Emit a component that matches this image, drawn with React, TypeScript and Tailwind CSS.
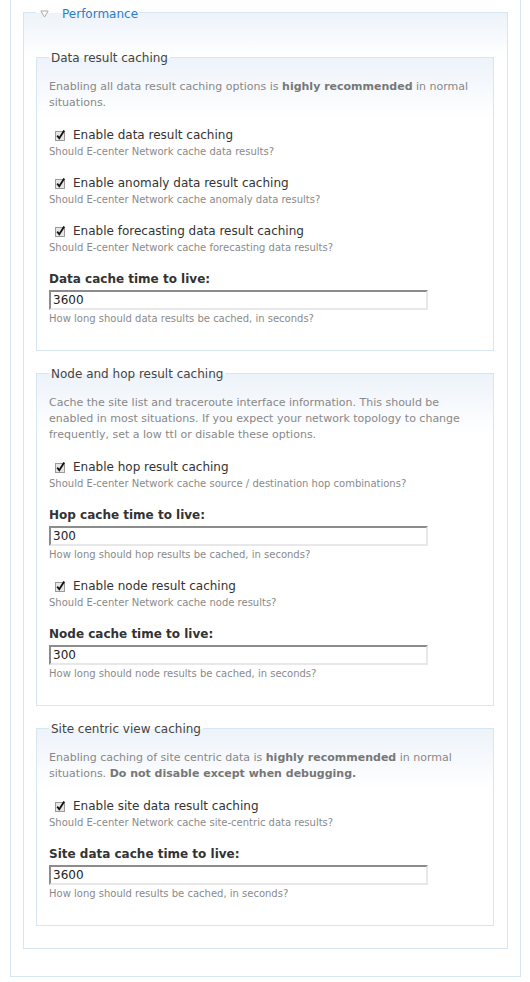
import React from "react";

const font = "font-['DejaVu_Sans',Verdana,sans-serif]";

function Check() {
  return (
    <svg width="13" height="13" viewBox="0 0 13 13" className="shrink-0">
      <rect x="1.5" y="2.5" width="9" height="9" fill="#e6e6e6" stroke="#9a9a9a" />
      <path d="M3.2 6.6 L5.3 9.2 L10.2 1.6" fill="none" stroke="#111" strokeWidth="1.8" />
    </svg>
  );
}

function CheckItem({ label, help }: { label: string; help: string }) {
  return (
    <div className="mt-4">
      <div className="flex items-center gap-[6px] pl-[5px] h-4 text-[12px] leading-4 text-[#333]">
        <Check />
        <span>{label}</span>
      </div>
      <p className="mt-[2px] text-[10px] leading-[14px] text-[#8a8a8a]">{help}</p>
    </div>
  );
}

function TextItem({ label, value, help }: { label: string; value: string; help: string }) {
  return (
    <div className="mt-4">
      <div className="text-[12px] leading-4 font-bold text-[#333]">{label}</div>
      <input
        readOnly
        value={value}
        className="mt-[3px] block w-[379px] h-5 px-[2px] border-2 border-t-[#8c8c8c] border-l-[#8c8c8c] border-r-[#e8e8e8] border-b-[#e8e8e8] bg-white text-[12px] text-[#222] outline-none"
      />
      <p className="mt-[2px] text-[10px] leading-[14px] text-[#8a8a8a]">{help}</p>
    </div>
  );
}

function Section({ title, children, className = "" }: { title: string; children: React.ReactNode; className?: string }) {
  return (
    <fieldset
      className={`w-[458px] border border-[#d8e6f2] bg-[linear-gradient(to_bottom,#edf3fa,#ffffff_60px)] pl-3 pr-3 pb-6 ${className}`}
    >
      <legend className="px-[2px] pt-[2px] text-[12px] leading-4 text-[#444]">{title}</legend>
      {children}
    </fieldset>
  );
}

export default function App() {
  return (
    <div className={`h-[982px] overflow-hidden bg-white ${font}`}>
      <div className="ml-[10px] w-[511px] border border-t-0 border-[#d8e6f2] pt-[2px] pb-[27px] px-3">
        {/* Performance */}
        <fieldset className="w-[485px] border border-[#d8e6f2] bg-[linear-gradient(to_bottom,#edf3fa,#ffffff_45px)] pl-3 pt-[26px] pb-[22px]">
          <legend className="pl-[4px] pr-[1px] pt-[4px] flex items-center text-[12px] leading-4 text-[#2a7dc9]">
            <svg width="9" height="8" viewBox="0 0 9 8" className="mr-[13px]">
              <path d="M0.8 1 H8.2 L4.5 7 Z" fill="#fff" stroke="#aaa" />
            </svg>
            Performance
          </legend>

          <Section title="Data result caching">
            <p className="mt-[13px] text-[11px] leading-4 text-[#888]">
              Enabling all data result caching options is <b className="text-[#777]">highly recommended</b> in normal situations.
            </p>
            <CheckItem label="Enable data result caching" help="Should E-center Network cache data results?" />
            <CheckItem label="Enable anomaly data result caching" help="Should E-center Network cache anomaly data results?" />
            <CheckItem label="Enable forecasting data result caching" help="Should E-center Network cache forecasting data results?" />
            <TextItem label="Data cache time to live:" value="3600" help="How long should data results be cached, in seconds?" />
          </Section>

          <Section title="Node and hop result caching" className="mt-[13px]">
            <p className="mt-[13px] text-[11px] leading-4 text-[#888]">
              Cache the site list and traceroute interface information. This should be enabled in most situations. If you expect your network topology to change frequently, set a low ttl or disable these options.
            </p>
            <CheckItem label="Enable hop result caching" help="Should E-center Network cache source / destination hop combinations?" />
            <TextItem label="Hop cache time to live:" value="300" help="How long should hop results be cached, in seconds?" />
            <CheckItem label="Enable node result caching" help="Should E-center Network cache node results?" />
            <TextItem label="Node cache time to live:" value="300" help="How long should node results be cached, in seconds?" />
          </Section>

          <Section title="Site centric view caching" className="mt-[13px]">
            <p className="mt-[13px] text-[11px] leading-4 text-[#888]">
              Enabling caching of site centric data is <b className="text-[#777]">highly recommended</b> in normal situations.{" "}
              <b className="text-[#777]">Do not disable except when debugging.</b>
            </p>
            <CheckItem label="Enable site data result caching" help="Should E-center Network cache site-centric data results?" />
            <TextItem label="Site data cache time to live:" value="3600" help="How long should results be cached, in seconds?" />
          </Section>
        </fieldset>
      </div>
    </div>
  );
}
